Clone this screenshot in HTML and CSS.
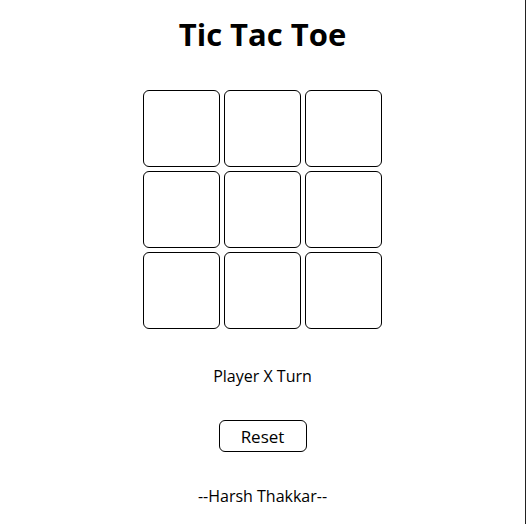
FILE: index.html
```html
<!DOCTYPE html>
<html lang="en">
<head>
<meta charset="utf-8">
<title>Tic Tac Toe</title>
<link rel="stylesheet" href="styles.css">
</head>
<body>
<main class="app">
  <h1 class="title">Tic Tac Toe</h1>
  <div class="board">
    <button class="cell"></button>
    <button class="cell"></button>
    <button class="cell"></button>
    <button class="cell"></button>
    <button class="cell"></button>
    <button class="cell"></button>
    <button class="cell"></button>
    <button class="cell"></button>
    <button class="cell"></button>
  </div>
  <p class="status">Player X Turn</p>
  <button class="reset">Reset</button>
  <p class="credit">--Harsh Thakkar--</p>
</main>
</body>
</html>
```
FILE: styles.css
```css
html {
  background: #fff;
}
body {
  margin: 0;
  min-height: 524px;
  border-right: 1px solid #222;
  box-sizing: border-box;
  font-family: "Open Sans", "Noto Sans", sans-serif;
  color: #000;
}
.app {
  display: flex;
  flex-direction: column;
  align-items: center;
  padding: 0 8px;
}
.title {
  margin: 14px 0 0;
  font-size: 31px;
  font-weight: 700;
  line-height: 40px;
}
.board {
  margin-top: 36px;
  display: grid;
  grid-template-columns: repeat(3, 77px);
  grid-template-rows: repeat(3, 77px);
  gap: 4px;
}
.cell {
  background: #fff;
  border: 1px solid #000;
  border-radius: 6px;
  padding: 0;
}
.status {
  margin: 37px 0 0;
  font-size: 16px;
  line-height: 20px;
}
.reset {
  margin-top: 34px;
  width: 88px;
  height: 32px;
  background: #fff;
  border: 1px solid #000;
  border-radius: 6px;
  font-family: inherit;
  font-size: 17px;
  color: #000;
  padding: 0;
}
.credit {
  margin: 34px 0 0;
  font-size: 16px;
  line-height: 20px;
}
```
